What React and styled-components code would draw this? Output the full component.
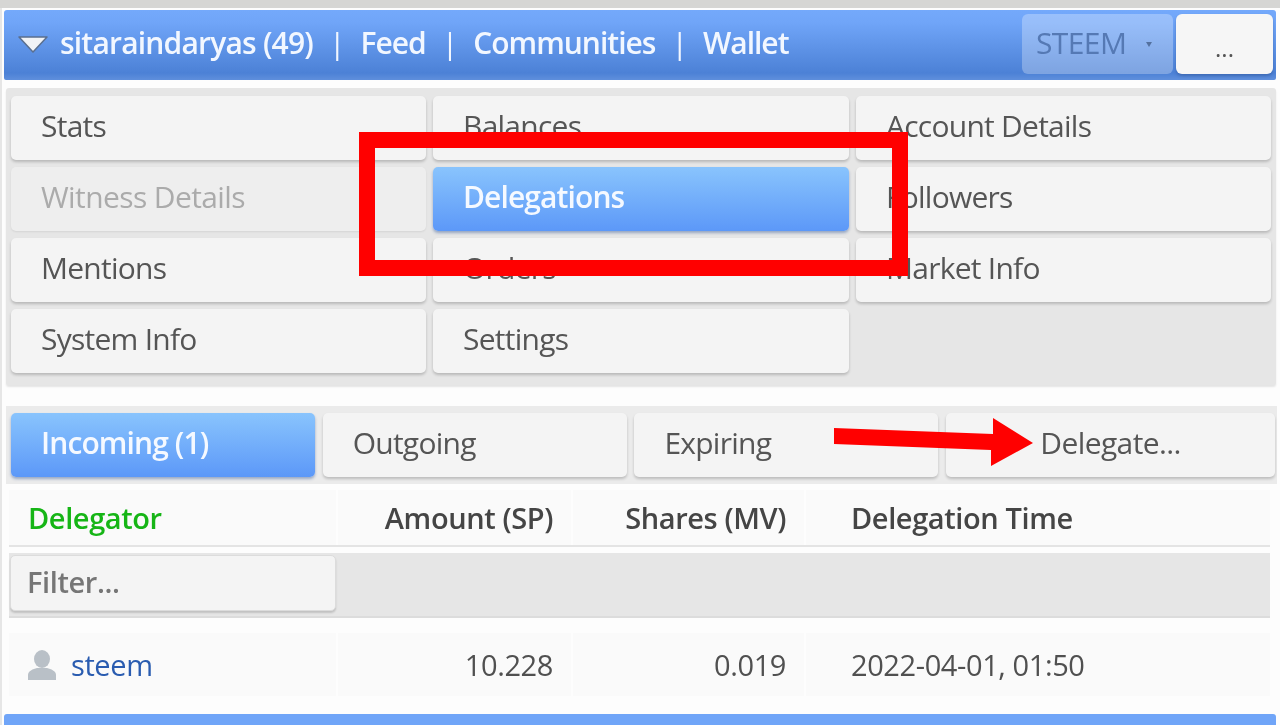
import React from "react";
import styled, { createGlobalStyle, css } from "styled-components";

const Global = createGlobalStyle`
  html, body { margin: 0; padding: 0; background: #fff; overflow: hidden; }
  body { font-family: "Open Sans", "Noto Sans", sans-serif; }
  * { box-sizing: border-box; }
`;

const Page = styled.div`
  position: relative;
  width: 1280px;
  height: 725px;
  overflow: hidden;
  background: #fdfdfd;
  box-shadow: inset 2px 0 0 #e6e6e6;
  filter: blur(0.7px);
`;

const TopStrip = styled.div`
  height: 8px;
  background: #d6d6d4;
  margin-bottom: 2px;
`;

const TitleBar = styled.header`
  height: 70px;
  margin: 0 4px 8px;
  padding: 4px 3px 6px 14px;
  border-radius: 3px 3px 2px 2px;
  background: linear-gradient(#74a9fb, #70a5f8 18%, #4c81d6 90%, #5f8fdc);
  display: flex;
  align-items: center;
`;

const Triangle = styled.svg`
  width: 30px;
  height: 18px;
  margin-right: 12px;
  flex: none;
`;

const Crumbs = styled.nav`
  flex: 1;
  display: flex;
  align-items: center;
  gap: 16px;
  padding-bottom: 4px;
  color: #f2f7ff;
  font-size: 30px;
  font-weight: 600;
  letter-spacing: -1px;
  white-space: nowrap;
`;

const UserName = styled.span`
  letter-spacing: -0.8px;
`;

const Sep = styled.span`
  font-weight: 400;
  color: #f2f7ff;
`;

const CoinSelect = styled.div`
  width: 151px;
  height: 60px;
  margin-right: 3px;
  padding: 0 0 4px 14px;
  border-radius: 6px;
  background: rgba(255, 255, 255, 0.28);
  color: #5579b4;
  font-size: 30px;
  letter-spacing: -0.6px;
  display: flex;
  align-items: center;
`;

const Caret = styled.span`
  margin: 4px 0 0 20px;
  width: 0;
  height: 0;
  border-left: 3px solid transparent;
  border-right: 3px solid transparent;
  border-top: 5px solid #54719f;
`;

const MoreButton = styled.div`
  width: 97px;
  height: 60px;
  border-radius: 6px;
  background: #f6f6f6;
  color: #555;
  font-size: 24px;
  display: flex;
  align-items: center;
  justify-content: center;
  padding-top: 7px;
  box-shadow: 0 2px 3px rgba(30, 60, 120, 0.35);
`;

const MenuPanel = styled.section`
  height: 297px;
  margin: 0 4px 21px 6px;
  padding: 8px 5px 0;
  background: #e6e6e6;
  border-radius: 3px;
  box-shadow: 0 2px 2px rgba(0, 0, 0, 0.1);
  display: grid;
  grid-template-columns: 415px 416px 415px;
  grid-auto-rows: 64px;
  row-gap: 7px;
  column-gap: 7px;
`;

const NavButton = styled.div`
  height: 64px;
  padding: 0 0 5px 30px;
  border-radius: 5px;
  font-size: 30px;
  letter-spacing: -0.75px;
  display: flex;
  align-items: center;
  white-space: nowrap;
  background: #f4f4f4;
  color: #555;
  box-shadow: 0 2px 3px rgba(0, 0, 0, 0.2);
  ${(p) =>
    p.$active &&
    css`
      background: linear-gradient(#89c4fd, #5c98f8);
      color: #f5f9ff;
      font-weight: 600;
      letter-spacing: -0.9px;
      box-shadow: 0 2px 3px rgba(30, 70, 140, 0.4);
    `}
  ${(p) =>
    p.$disabled &&
    css`
      background: #eeeeee;
      color: #ababab;
      letter-spacing: -0.6px;
      box-shadow: 0 1px 2px rgba(0, 0, 0, 0.08);
    `}
  ${(p) =>
    p.$centered &&
    css`
      padding-left: 0;
      justify-content: center;
      letter-spacing: -0.6px;
    `}
`;

const TabsPanel = styled.section`
  height: 78px;
  margin: 0 3px 6px 6px;
  padding: 7px 0 0 5px;
  background: #ebebeb;
  display: grid;
  grid-template-columns: 304px 304px 304px 329px;
  column-gap: 7.7px;
`;

const Table = styled.section`
  margin-left: 9px;
  width: 1261px;
  display: flex;
  flex-direction: column;
`;

const Row = styled.div`
  display: grid;
  grid-template-columns: 327px 233px 231px 464px;
  column-gap: 2px;
`;

const HeadRow = styled(Row)`
  height: 57px;
  border-bottom: 2px solid #e4e4e4;
  margin-bottom: 6px;
`;

const FilterRow = styled(Row)`
  height: 65px;
  border-bottom: 2px solid #dcdcdc;
  margin-bottom: 15px;
  background: #e6e6e6;
`;

const DataRow = styled(Row)`
  height: 63px;
  margin-bottom: 18px;
`;

const Cell = styled.div`
  background: #fafafa;
  padding: 0 18px 0 ${(p) => (p.$inset ? "45px" : "19px")};
  font-size: 29px;
  letter-spacing: -0.4px;
  white-space: nowrap;
  display: flex;
  align-items: center;
  color: #505050;
  justify-content: ${(p) => (p.$right ? "flex-end" : "flex-start")};
`;

const HeadCell = styled(Cell)`
  font-weight: 600;
  color: ${(p) => (p.$sorted ? "#16b516" : "#454545")};
`;

const DelegatorCell = styled(Cell)`
  gap: 14px;
  padding-left: 18px;
`;

const FilterCell = styled.div`
  background: #e6e6e6;
`;

const FilterInput = styled.div`
  width: 326px;
  height: 56px;
  margin: 2px 0 0 1px;
  padding: 0 0 3px 16px;
  background: #f4f4f4;
  border: 1px solid #dcdcdc;
  border-radius: 5px;
  box-shadow: 0 2px 2px rgba(0, 0, 0, 0.16);
  color: #767676;
  font-size: 29px;
  font-weight: 600;
  letter-spacing: -0.4px;
  display: flex;
  align-items: center;
`;

const UserLink = styled.span`
  color: #2a5cb0;
`;

const Footer = styled.footer`
  height: 60px;
  margin: 0 4px;
  border-radius: 3px 3px 0 0;
  background: #70a5f8;
`;

const RedFrame = styled.div`
  position: absolute;
  left: 359px;
  top: 132px;
  width: 549px;
  height: 144px;
  border: 16px solid #ff0000;
`;

const RedArrow = styled.svg`
  position: absolute;
  left: 0;
  top: 0;
  width: 1280px;
  height: 725px;
  pointer-events: none;
`;

const menu = [
  ["Stats"],
  ["Balances"],
  ["Account Details"],
  ["Witness Details", "disabled"],
  ["Delegations", "active"],
  ["Followers"],
  ["Mentions"],
  ["Orders"],
  ["Market Info"],
  ["System Info"],
  ["Settings"],
];

const tabs = ["Incoming (1)", "Outgoing", "Expiring", "Delegate..."];

export default function App() {
  return (
    <Page>
      <Global />
      <TopStrip />
      <TitleBar>
        <Triangle viewBox="0 0 30 18">
          <path d="M1 2h28L15 17z" fill="#f1f3f6" stroke="#5a6f8f" strokeWidth="1.5" strokeLinejoin="round" />
        </Triangle>
        <Crumbs>
          <UserName>sitaraindaryas (49)</UserName>
          <Sep>|</Sep>
          <span>Feed</span>
          <Sep>|</Sep>
          <span>Communities</span>
          <Sep>|</Sep>
          <span>Wallet</span>
        </Crumbs>
        <CoinSelect>
          STEEM
          <Caret />
        </CoinSelect>
        <MoreButton>...</MoreButton>
      </TitleBar>
      <MenuPanel>
        {menu.map(([label, state]) => (
          <NavButton key={label} $active={state === "active"} $disabled={state === "disabled"}>
            {label}
          </NavButton>
        ))}
      </MenuPanel>
      <TabsPanel>
        {tabs.map((t, i) => (
          <NavButton key={t} $active={i === 0} $centered={i === 3}>
            {t}
          </NavButton>
        ))}
      </TabsPanel>
      <Table>
        <HeadRow>
          <HeadCell $sorted>Delegator</HeadCell>
          <HeadCell $right>Amount (SP)</HeadCell>
          <HeadCell $right>Shares (MV)</HeadCell>
          <HeadCell $inset>Delegation Time</HeadCell>
        </HeadRow>
        <FilterRow>
          <FilterCell>
            <FilterInput>Filter...</FilterInput>
          </FilterCell>
          <FilterCell />
          <FilterCell />
          <FilterCell />
        </FilterRow>
        <DataRow>
          <DelegatorCell>
            <svg width="30" height="30" viewBox="0 0 30 30">
              <ellipse cx="15" cy="9" rx="8" ry="9" fill="#b9c0c7" />
              <path d="M1 30v-5c0-4 5-6 9-7h10c4 1 9 3 9 7v5z" fill="#b9c0c7" />
            </svg>
            <UserLink>steem</UserLink>
          </DelegatorCell>
          <Cell $right>10.228</Cell>
          <Cell $right>0.019</Cell>
          <Cell $inset>2022-04-01, 01:50</Cell>
        </DataRow>
      </Table>
      <Footer />
      <RedFrame />
      <RedArrow viewBox="0 0 1280 725">
        <path d="M834 428L993 434V418L1033 443L991 466V450L834 444z" fill="#ff0000" />
      </RedArrow>
    </Page>
  );
}
